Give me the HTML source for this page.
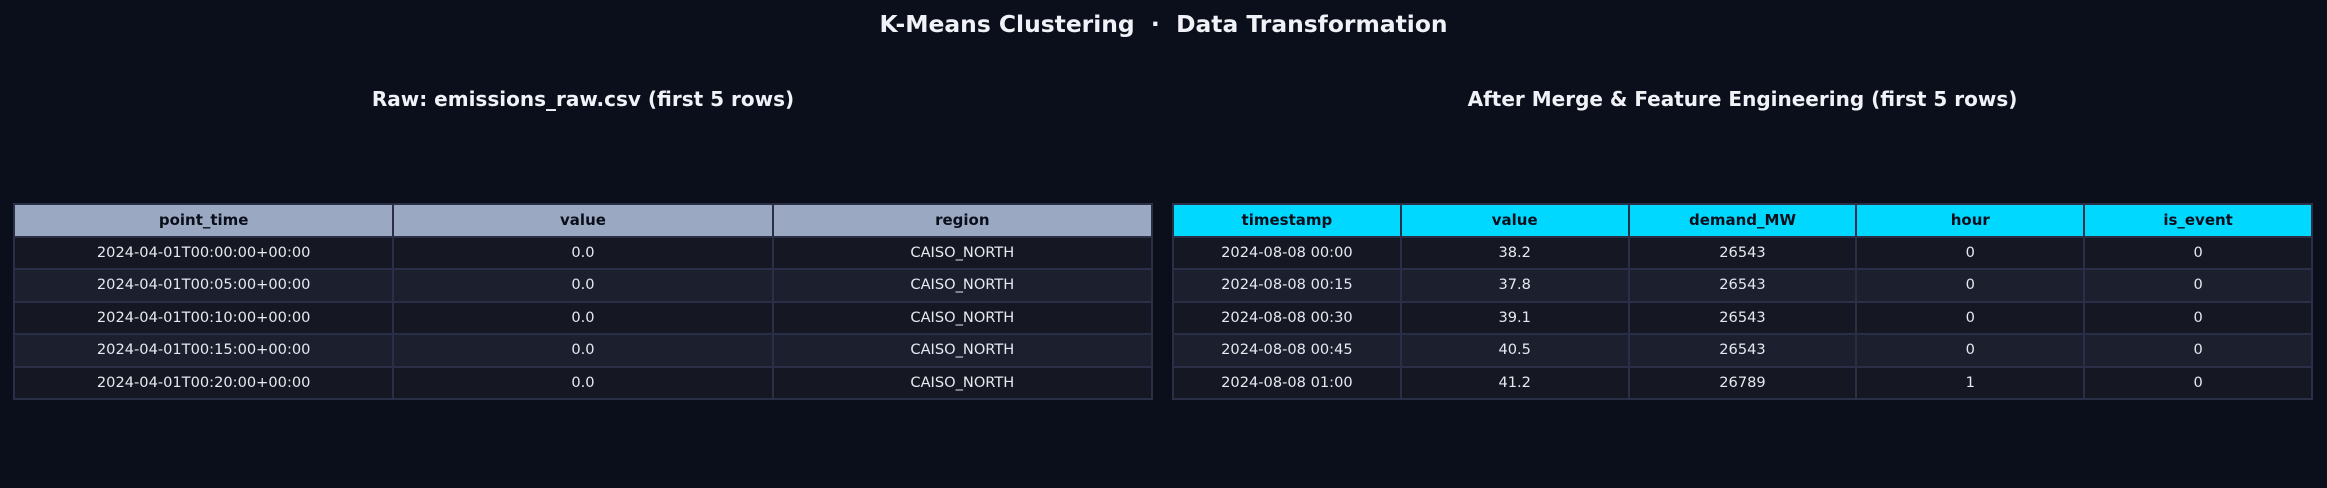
<!DOCTYPE html>
<html><head><meta charset="utf-8"><style>
html,body{margin:0;padding:0;background:#0b0f1b;width:2327px;height:488px;overflow:hidden;font-family:"DejaVu Sans","Liberation Sans",sans-serif;color:#e6e9f0}
.t{position:absolute;left:0;width:2327px;text-align:center;font-weight:bold;font-size:23.4px;top:10px;color:#f0f2f7}
.s{position:absolute;font-weight:bold;font-size:20px;text-align:center;color:#f0f2f7;top:87px}
table{position:absolute;top:203px;border-collapse:collapse;table-layout:fixed}
td,th{border:2px solid #2a2f47;text-align:center;font-size:14.6px;padding:0;height:30.5px;line-height:30.5px}
th{font-weight:bold;color:#0b0f1b;font-size:15px}
tr:nth-child(even) td{background:#151822}
tr:nth-child(odd) td{background:#1b1f2e}
.l th{background:#9aa8c2}
.r th{background:#00d8ff}
</style></head><body>
<div class="t">K-Means Clustering &nbsp;·&nbsp; Data Transformation</div>
<div class="s" style="left:13px;width:1140px">Raw: emissions_raw.csv (first 5 rows)</div>
<div class="s" style="left:1172px;width:1141px">After Merge &amp; Feature Engineering (first 5 rows)</div>
<table class="l" style="left:13px;width:1140px">
<tr><th>point_time</th><th>value</th><th>region</th></tr>
<tr><td>2024-04-01T00:00:00+00:00</td><td>0.0</td><td>CAISO_NORTH</td></tr>
<tr><td>2024-04-01T00:05:00+00:00</td><td>0.0</td><td>CAISO_NORTH</td></tr>
<tr><td>2024-04-01T00:10:00+00:00</td><td>0.0</td><td>CAISO_NORTH</td></tr>
<tr><td>2024-04-01T00:15:00+00:00</td><td>0.0</td><td>CAISO_NORTH</td></tr>
<tr><td>2024-04-01T00:20:00+00:00</td><td>0.0</td><td>CAISO_NORTH</td></tr>
</table>
<table class="r" style="left:1172px;width:1141px">
<tr><th>timestamp</th><th>value</th><th>demand_MW</th><th>hour</th><th>is_event</th></tr>
<tr><td>2024-08-08 00:00</td><td>38.2</td><td>26543</td><td>0</td><td>0</td></tr>
<tr><td>2024-08-08 00:15</td><td>37.8</td><td>26543</td><td>0</td><td>0</td></tr>
<tr><td>2024-08-08 00:30</td><td>39.1</td><td>26543</td><td>0</td><td>0</td></tr>
<tr><td>2024-08-08 00:45</td><td>40.5</td><td>26543</td><td>0</td><td>0</td></tr>
<tr><td>2024-08-08 01:00</td><td>41.2</td><td>26789</td><td>1</td><td>0</td></tr>
</table>
</body></html>
